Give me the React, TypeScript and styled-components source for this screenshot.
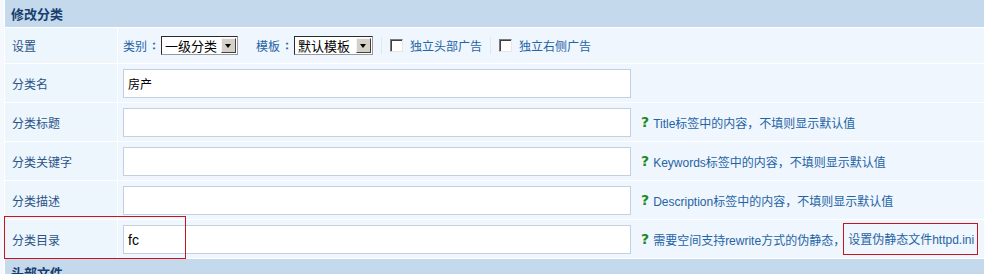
import styled, { createGlobalStyle } from 'styled-components'

const GlobalStyle = createGlobalStyle`
  html, body {
    margin: 0;
    padding: 0;
    background: #f5f9fd;
    overflow: hidden;
  }
  body {
    font-family: "Liberation Sans", "Noto Sans CJK SC", sans-serif;
    font-size: 12px;
  }
`

interface FieldRow {
  label: string
  value?: string
  help?: string
}

const fieldRows: FieldRow[] = [
  { label: '分类名', value: '房产' },
  { label: '分类标题', value: '', help: 'Title标签中的内容，不填则显示默认值' },
  { label: '分类关键字', value: '', help: 'Keywords标签中的内容，不填则显示默认值' },
  { label: '分类描述', value: '', help: 'Description标签中的内容，不填则显示默认值' },
]

const App: React.FC = () => {
  return (
    <Page>
      <GlobalStyle />
      <FormTable>
        <SectionHead>修改分类</SectionHead>

        <LabelCell $short>设置</LabelCell>
        <ContentCell $short>
          <Option>
            类别<Colon>：</Colon>
            <FakeSelect $width={77}>
              <SelectText>一级分类</SelectText>
              <SelectArrow />
            </FakeSelect>
          </Option>
          <Option>
            模板<Colon>：</Colon>
            <FakeSelect $width={79}>
              <SelectText>默认模板</SelectText>
              <SelectArrow />
            </FakeSelect>
          </Option>
          <Divider />
          <Option>
            <CheckBox />
            独立头部广告
          </Option>
          <Divider />
          <Option>
            <CheckBox />
            独立右侧广告
          </Option>
        </ContentCell>

        {fieldRows.map((row) => (
          <Row key={row.label}>
            <LabelCell>{row.label}</LabelCell>
            <ContentCell>
              <TextBox>{row.value}</TextBox>
              {row.help && (
                <Help>
                  <Mark>?</Mark>
                  {row.help}
                </Help>
              )}
            </ContentCell>
          </Row>
        ))}

        <LabelCell>分类目录</LabelCell>
        <ContentCell>
          <TextBox $latin>fc</TextBox>
          <Help>
            <Mark>?</Mark>
            需要空间支持rewrite方式的伪静态，
            <Boxed>设置伪静态文件httpd.ini</Boxed>
          </Help>
        </ContentCell>

        <SectionHead>头部文件</SectionHead>
      </FormTable>
      <Highlight />
    </Page>
  )
}

const Page = styled.div`
  position: relative;
  width: 1000px;
  height: 274px;
  padding-left: 4px;
  overflow: hidden;
`

const FormTable = styled.div`
  display: grid;
  grid-template-columns: 112px 1fr;
  grid-template-rows: 27px 35px;
  grid-auto-rows: 38px;
  column-gap: 1px;
  row-gap: 1px;
  background: #ffffff;
  padding-left: 1px;
`

const Row = styled.div`
  display: contents;
`

const SectionHead = styled.div`
  grid-column: 1 / -1;
  height: 27px;
  display: flex;
  align-items: center;
  padding-left: 6px;
  background: #c5d9ed;
  color: #173e6e;
  font-family: "Noto Sans CJK SC", sans-serif;
  font-size: 13px;
  font-weight: bold;
`

const LabelCell = styled.div<{ $short?: boolean }>`
  display: flex;
  align-items: center;
  padding-left: 7px;
  background: #edf5fd;
  color: #2a5487;
  height: ${({ $short }) => ($short ? '35px' : '38px')};
`

const ContentCell = styled.div<{ $short?: boolean }>`
  display: flex;
  align-items: center;
  padding-left: 5px;
  background: #eff6fd;
  color: #1f64a6;
  height: ${({ $short }) => ($short ? '35px' : '38px')};
  white-space: nowrap;
`

const Option = styled.span`
  display: inline-flex;
  align-items: center;
  margin-right: 18px;
  color: #1f64a6;
`

const Colon = styled.span`
  display: inline-block;
  width: 14px;
  text-align: center;
  font-family: "Liberation Sans", sans-serif;
  font-weight: bold;
`

const FakeSelect = styled.span<{ $width: number }>`
  display: inline-flex;
  align-items: center;
  width: ${({ $width }) => $width}px;
  height: 19px;
  box-sizing: border-box;
  border: 1px solid #2b2b2b;
  border-right-color: #9a9a9a;
  border-bottom-color: #9a9a9a;
  background: #ffffff;
  padding: 1px;
`

const SelectText = styled.span`
  flex: 1;
  color: #000000;
  font-family: "Noto Sans CJK SC", sans-serif;
  font-size: 13px;
  line-height: 15px;
  padding-left: 2px;
`

const SelectArrow = styled.span`
  position: relative;
  width: 15px;
  height: 15px;
  box-sizing: border-box;
  background: #d4d0c8;
  border: 1px solid;
  border-color: #f4f4f4 #404040 #404040 #f4f4f4;
  &::after {
    content: '';
    position: absolute;
    left: 3px;
    top: 5px;
    border-left: 3.5px solid transparent;
    border-right: 3.5px solid transparent;
    border-top: 4px solid #000;
  }
`

const Divider = styled.span`
  width: 1px;
  height: 17px;
  background: #dde8f2;
  margin: 0 8px 0 -10px;
`

const CheckBox = styled.span`
  width: 13px;
  height: 13px;
  box-sizing: border-box;
  background: #ffffff;
  border: 1px solid;
  border-color: #7a7a7a #e6e6e6 #e6e6e6 #7a7a7a;
  box-shadow: inset 1px 1px 0 #404040;
  margin-right: 7px;
`

const TextBox = styled.div<{ $latin?: boolean }>`
  width: 508px;
  height: 29px;
  box-sizing: border-box;
  background: #ffffff;
  border: 1px solid #c3d1de;
  display: flex;
  align-items: center;
  padding-left: 4px;
  color: #000000;
  font-size: ${({ $latin }) => ($latin ? '14px' : '12px')};
  margin-top: 1px;
`

const Help = styled.span`
  display: inline-flex;
  align-items: center;
  margin-left: 10px;
  color: #1f64a6;
`

const Mark = styled.span`
  color: #1d8a1d;
  font-weight: bold;
  font-size: 14px;
  font-family: "DejaVu Sans", sans-serif;
  margin-right: 4px;
`

const Boxed = styled.span`
  border: 1px solid #c8141c;
  padding: 6px 3px 7px 4px;
  margin-left: -2px;
`

const Highlight = styled.div`
  position: absolute;
  left: 4px;
  top: 216px;
  width: 182px;
  height: 43px;
  box-sizing: border-box;
  border: 1px solid #c8141c;
  pointer-events: none;
`

export default App
